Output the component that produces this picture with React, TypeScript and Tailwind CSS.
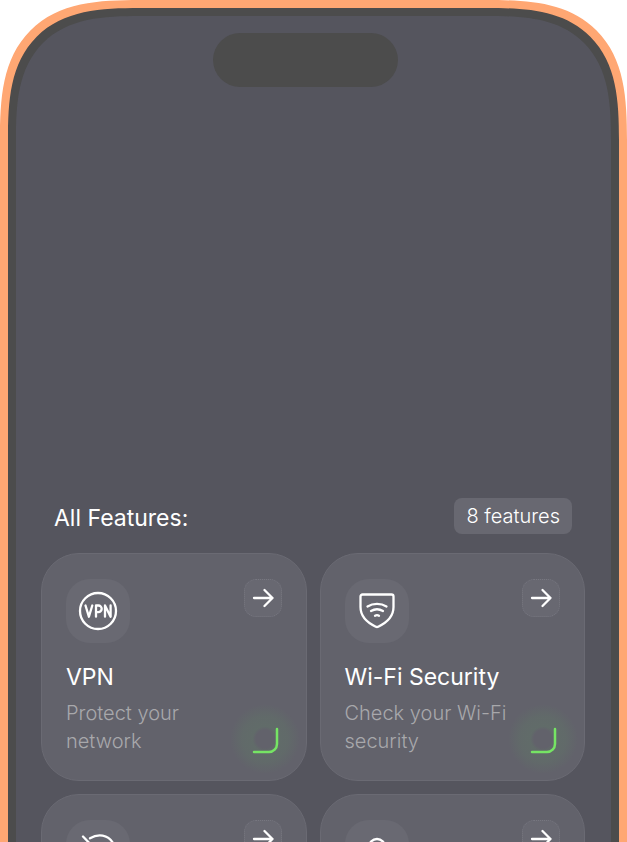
import type { ReactNode } from 'react';

type Feature = {
  id: string;
  title?: string;
  description?: string;
  icon: ReactNode;
};

const VpnIcon = () => (
  <svg viewBox="0 0 40 40" className="h-10 w-10" fill="none" stroke="currentColor" strokeWidth="2.3" strokeLinecap="round" strokeLinejoin="round" aria-hidden="true">
    <circle cx="20" cy="20" r="18" />
    <path d="M7.500 14.500l3.400 11.200 3.400-11.200" />
    <path d="M18 25.700V14.500h2.400a3.200 3.200 0 0 1 0 6.600H18" />
    <path d="M27 25.700V14.500l5.600 11.200V14.500" />
  </svg>
);

const WifiShieldIcon = () => (
  <svg viewBox="0 0 40 40" className="h-10 w-10" fill="none" stroke="currentColor" strokeWidth="2.3" strokeLinecap="round" strokeLinejoin="round" aria-hidden="true">
    <path d="M5.500 3.500h29a2 2 0 0 1 2 2V16c0 9-6.500 15.500-15.300 19.700a2.600 2.600 0 0 1-2.400 0C10 31.500 3.500 25 3.500 16V5.500a2 2 0 0 1 2-2z" />
    <path d="M10.500 15.500c5.600-3.400 13.400-3.400 19 0" />
    <path d="M14 20c3.600-2.100 8.400-2.100 12 0" />
    <path d="M18 24.700c1.300-.7 2.700-.7 4 0" />
  </svg>
);

const EyeOffIcon = () => (
  <svg viewBox="0 0 40 40" className="h-10 w-10" fill="none" stroke="currentColor" strokeWidth="2.3" strokeLinecap="round" strokeLinejoin="round" aria-hidden="true">
    <path d="M5 4.500l30 31" />
    <path d="M12 6.300C20 1.500 30 2.500 35 11c2.500 4.500 2 10-.5 14" />
    <path d="M7 13c-6 11 1 23 13 23 3 0 6-1 8-2" />
  </svg>
);

const UserIcon = () => (
  <svg viewBox="0 0 40 40" className="h-10 w-10" fill="none" stroke="currentColor" strokeWidth="2.3" strokeLinecap="round" strokeLinejoin="round" aria-hidden="true">
    <circle cx="20" cy="15" r="8" />
    <path d="M5 36c2-7 8-10 15-10s13 3 15 10" />
  </svg>
);

const ArrowIcon = () => (
  <svg viewBox="0 0 24 24" className="h-6 w-6" fill="none" stroke="currentColor" strokeWidth="2.3" strokeLinecap="round" strokeLinejoin="round" aria-hidden="true">
    <path d="M3 12h18.500M13.500 4l8 8-8 8" />
  </svg>
);

const CornerGlow = () => (
  <svg viewBox="0 0 72 72" className="absolute right-1 bottom-1 h-18 w-18" fill="none" aria-hidden="true">
    <defs>
      <radialGradient id="glow">
        <stop offset="0.26" stopColor="#5f8065" stopOpacity="0" />
        <stop offset="0.36" stopColor="#5f8065" stopOpacity="0.32" />
        <stop offset="0.65" stopColor="#5f8065" stopOpacity="0.26" />
        <stop offset="1" stopColor="#5f8065" stopOpacity="0" />
      </radialGradient>
    </defs>
    <circle cx="35" cy="35" r="35" fill="url(#glow)" />
    <path d="M24 48h15a8 8 0 0 0 8-8V25" stroke="#76e464" strokeWidth="2.5" strokeLinecap="round" />
  </svg>
);

const features: Feature[] = [
  { id: 'vpn', title: 'VPN', description: 'Protect your network', icon: <VpnIcon /> },
  { id: 'wifi', title: 'Wi-Fi Security', description: 'Check your Wi-Fi security', icon: <WifiShieldIcon /> },
  { id: 'hidden', icon: <EyeOffIcon /> },
  { id: 'user', icon: <UserIcon /> },
];

const FeatureCard = ({ feature }: { feature: Feature }) => (
  <article className="relative min-h-57 rounded-[38px] border border-[#6a6a73] bg-[#62626b] px-6 py-[25px]">
    <div className="flex items-start justify-between">
      <div className="flex h-16 w-16 items-center justify-center rounded-3xl bg-[#696972]">{feature.icon}</div>
      <button type="button" aria-labelledby={feature.title ? feature.id : undefined} className="flex h-[38px] w-[38px] items-center justify-center rounded-xl border border-dotted border-[#777780] bg-[#686871]">
        <ArrowIcon />
      </button>
    </div>
    {feature.title && (
      <>
        <h3 id={feature.id} className="mt-4 text-[23px] leading-9 whitespace-nowrap">{feature.title}</h3>
        <p className="max-w-44 pt-1 text-xl leading-7 font-light text-[#a8a8ab]">{feature.description}</p>
        <CornerGlow />
      </>
    )}
  </article>
);

export default function App() {
  return (
    <div className="h-screen overflow-hidden bg-white font-['Inter',sans-serif] text-white">
      <div className="rounded-t-[140px] bg-[#ffa773] p-2 [corner-shape:superellipse(1.5)]">
        <div className="rounded-t-[132px] bg-[#4c4c4c] p-2 [corner-shape:superellipse(1.5)]">
          <main className="rounded-t-[124px] bg-[#55555e] pt-[17px] pr-[26px] pb-8 pl-[25px] [corner-shape:superellipse(1.5)]">
            <div className="flex justify-center pr-4">
              <div className="h-[54px] w-[185px] rounded-full bg-[#4c4c4c]" />
            </div>
            <div className="mt-[411px] flex items-center justify-between px-[13px]">
              <h2 className="pt-1 text-[23px] leading-8">All Features:</h2>
              <span className="rounded-lg bg-[#686871] px-3 py-1 text-xl leading-7 font-light">8 features</span>
            </div>
            <div className="mt-[19px] grid grid-cols-2 gap-[13px]">
              {features.map((feature) => (
                <FeatureCard key={feature.id} feature={feature} />
              ))}
            </div>
          </main>
        </div>
      </div>
    </div>
  );
}
